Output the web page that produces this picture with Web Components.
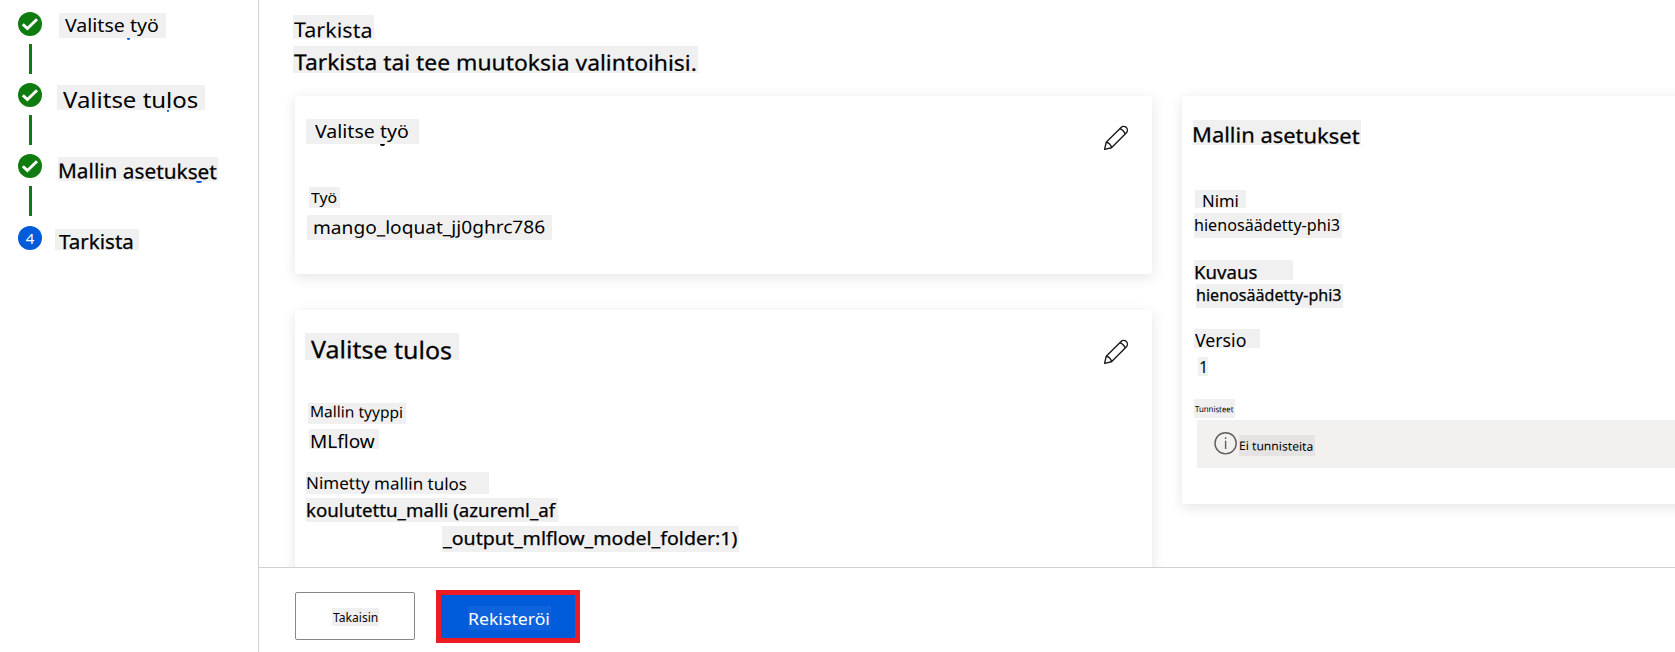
<!DOCTYPE html>
<html lang="fi">
<head>
<meta charset="utf-8">
<title>Rekisteröi malli</title>
<style>
html,body{margin:0;height:100%;background:#fff;overflow:hidden}
body{font-family:"Noto Sans","Open Sans",sans-serif;color:#000}
</style>
</head>
<body>
<wizard-page>
  <wizard-steps slot="steps">
    <wizard-step done><ui-label x="17" y="1" w="107" h="25" size="17.6" ink="93" dx="6" base="19.7" mark="68,3,#0a5ce0">Valitse työ</ui-label></wizard-step>
    <wizard-step done><ui-label x="15" y="2" w="148" h="25" size="22.4" ink="134.5" dx="5.5" base="24" mark="110,2,#0a5ce0">Valitse tulos</ui-label></wizard-step>
    <wizard-step done><ui-label x="16" y="3" w="160" h="24" size="20.2" ink="157.5" dx="1" base="21.4" tilt=".4" bold mark="138,6,#0a5ce0">Mallin asetukset</ui-label></wizard-step>
    <wizard-step number="4"><ui-label x="13" y="3" w="84" h="21" size="20.2" ink="73.5" dx="4.3" base="20.7" bold bg="#eff1f1">Tarkista</ui-label></wizard-step>
  </wizard-steps>

  <div slot="header">
    <ui-label x="34" y="15" w="81" h="24" size="20.4" ink="77" dx="1" base="22.8" tilt=".7">Tarkista</ui-label>
    <ui-label x="34" y="7" w="405" h="27" size="21.6" ink="402" dx=".7" base="24.5" tilt=".1" bold>Tarkista tai tee muutoksia valintoihisi.</ui-label>
  </div>

  <review-card slot="left" editable style="height:178px">
    <ui-label x="11" y="23" w="113" h="25" size="17.6" ink="93" dx="9" base="19.5" mark="74,5,#000">Valitse työ</ui-label>
    <ui-label x="14" y="43" w="31" h="21" size="15" ink="26" dx="2" base="16.5">Työ</ui-label>
    <ui-label x="12" y="7" w="245" h="25" size="17.6" ink="231" dx="7" base="19.5" tilt="-.2">mango_loquat_jj0ghrc786</ui-label>
  </review-card>

  <review-card slot="left" editable style="height:300px">
    <ui-label x="10" y="23" w="154" h="27" size="24" ink="140.5" dx="5.5" base="25" tilt=".5" bold>Valitse tulos</ui-label>
    <ui-label x="13" y="43" w="98" h="21" size="15.4" ink="91" dx="3" base="15.3" tilt=".7">Mallin tyyppi</ui-label>
    <ui-label x="14" y="5" w="70" h="20" size="17.4" ink="64" dx="2" base="19">MLflow</ui-label>
    <ui-label x="11" y="23" w="183" h="22" size="16.6" ink="160" dx="1" base="17" tilt=".4">Nimetty mallin tulos</ui-label>
    <ui-label x="11" y="4" w="252" h="24" size="17.8" ink="249" dx="1" base="19.6" bold>koulutettu_malli (azureml_af</ui-label>
    <ui-label x="147" y="4" w="297" h="26" size="18.2" ink="295" dx="0" base="20" bold>_output_mlflow_model_folder:1)</ui-label>
  </review-card>

  <review-card slot="right" style="height:408px">
    <ui-label x="11" y="24" w="168" h="25" size="20.6" ink="165" dx="1.5" base="22.8" tilt=".6" bold>Mallin asetukset</ui-label>
    <ui-label x="13" y="45" w="51" h="18" size="17" ink="35.5" dx="8" base="17.2">Nimi</ui-label>
    <ui-label x="12" y="5" w="148" h="25" size="15.8" ink="145" dx="1" base="19">hienosäädetty-phi3</ui-label>
    <ui-label x="12" y="22" w="99" h="20" size="18.6" ink="62.5" dx="1.5" base="19.3" bold>Kuvaus</ui-label>
    <ui-label x="14" y="4" w="147" h="24" size="15.8" ink="144.5" dx=".7" base="17.8" bold>hienosäädetty-phi3</ui-label>
    <ui-label x="12" y="21" w="66" h="19" size="17.2" ink="51" dx=".5" base="18.3">Versio</ui-label>
    <ui-label x="16" y="9" w="10" h="19" size="16" dx="2" base="16.4">1</ui-label>
    <ui-label x="12" y="23" w="41" h="19" size="8.4" ink="38.5" dx="1.3" base="13.6" tilt=".5">Tunnisteet</ui-label>
    <info-bar><ui-label x="2" y="0" w="76" h="21" size="12" ink="72.5" dx="1" base="15.7" tilt=".6" bg="#e5e4e3">Ei tunnisteita</ui-label></info-bar>
  </review-card>

  <ui-button slot="footer"><ui-label x="36" y="15" w="47" h="18" size="12.6" ink="44.5" dx="1" base="14.6">Takaisin</ui-label></ui-button>
  <ui-button slot="footer" primary><ui-label x="27" y="11" w="83" h="24" size="16.8" ink="80.5" dx="1.5" base="20" bg="#0e62dc">Rekisteröi</ui-label></ui-button>
</wizard-page>

<script>
const define = (name, html, setup) => {
  const tpl = document.createElement('template');
  tpl.innerHTML = html;
  customElements.define(name, class extends HTMLElement {
    connectedCallback() {
      if (this.shadowRoot) return;
      this.attachShadow({mode: 'open'}).append(tpl.content.cloneNode(true));
      if (setup) setup(this, this.shadowRoot);
    }
  });
};

define('wizard-page', `<style>
  :host{display:grid;grid-template-columns:259px minmax(0,1fr);width:100%;height:100vh;overflow:hidden;background:#fff}
  aside{box-sizing:border-box;border-right:1px solid #d1d1d1}
  main{display:grid;grid-template-rows:567px 1fr;min-width:0}
  .body{overflow:hidden;display:flex;flex-direction:column}
  header{height:96px;flex:none}
  .cards{display:grid;grid-template-columns:857px 540px;gap:30px;padding-left:36px;align-items:start}
  .left{display:flex;flex-direction:column;gap:36px}
  footer{box-sizing:border-box;border-top:1px solid #d1d1d1;display:flex;gap:21px;align-items:flex-start;padding:22px 0 0 36px;background:#fff}
</style>
<aside><slot name="steps"></slot></aside>
<main><div class="body"><header><slot name="header"></slot></header>
<div class="cards"><div class="left"><slot name="left"></slot></div><slot name="right"></slot></div></div>
<footer><slot name="footer"></slot></footer></main>`);

define('wizard-steps', `<style>:host{display:flex;flex-direction:column;padding:12px 0 0 18px}</style><slot></slot>`);

define('wizard-step', `<style>
  :host{display:flex;align-items:flex-start;height:71px}
  :host([number]){padding-top:1px}
  .rail{width:24px;display:flex;flex-direction:column;flex:none}
  .dot{width:24px;height:24px;border-radius:50%;background:#107c10;display:flex;align-items:center;justify-content:center}
  .line{width:3px;height:30px;margin:8px 0 0 11px;background:#107c10}
  .num{display:none;color:#fff;font-size:15px;line-height:24px}
  :host([number]) .dot{background:#005bda}
  :host([number]) .line,:host([number]) svg{display:none}
  :host([number]) .num{display:block}
</style>
<div class="rail"><div class="dot"><svg width="24" height="24" viewBox="0 0 24 24"><path d="M4.8 12.2 9.4 16.6 19 7.2" fill="none" stroke="#fff" stroke-width="2.9"/></svg><span class="num"></span></div><div class="line"></div></div><slot></slot>`,
(el, root) => { root.querySelector('.num').textContent = el.getAttribute('number') || ''; });

define('review-card', `<style>
  :host{display:block;box-sizing:border-box;position:relative;background:#fff;border-radius:3px;box-shadow:0 3px 14px rgba(0,0,0,.11)}
  .wrap{display:flow-root}
  svg{display:none;position:absolute;right:23px;top:29px}
  :host([editable]) svg{display:block}
</style>
<div class="wrap"><slot></slot></div>
<svg width="26" height="26" viewBox="0 0 26 26" fill="none" stroke="#1b1a19" stroke-width="1.4" stroke-linejoin="round"><path d="M1.6 24.4 3.2 17.3 17.8 2.7C19.4 1.1 21.8 1.1 23.3 2.6 24.8 4.1 24.8 6.5 23.2 8.1L8.5 22.7ZM3.2 17.3C5.6 17.5 8.2 20.1 8.5 22.7M16.7 3.8C19.1 4.2 21.6 6.8 22.1 9.2"/></svg>`);

define('info-bar', `<style>
  :host{display:flex;align-items:flex-start;box-sizing:border-box;height:48px;margin:2px 0 0 15px;padding:15px 0 0 17px;background:#f3f1f0}
  svg{margin-top:-4px;flex:none}
</style>
<svg width="23" height="24" viewBox="0 0 23 24" fill="none" stroke="#605e5c"><circle cx="11.6" cy="12.3" r="10.6" stroke-width="1.4"/><path d="M11.6 9.8V18M11.6 6.2V8.1" stroke-width="1.4"/></svg><slot></slot>`);

define('ui-button', `<style>
  :host{display:block;width:120px;height:48px;box-sizing:border-box;border:1px solid #8a8886;border-radius:2px;background:#fff;margin-top:2px}
  :host([primary]){width:144px;height:53px;border:5px solid #ed1c24;border-radius:0;background:#005bda;color:#fff;margin-top:0}
  div{display:flow-root}
</style><div><slot></slot></div>`);

const ctx = document.createElement('canvas').getContext('2d');
/* Label on a tinted plate: "ink" is the drawn text width, "base" the baseline from the plate's top. */
define('ui-label', `<style>
  :host{display:block;position:relative;flex:none}
  span{display:block;width:max-content;white-space:pre;transform-origin:0 50%}
  :host([bold]) span{-webkit-text-stroke:.25px currentColor}
  i{position:absolute;top:100%;height:2px;border-radius:0 0 2px 2px}
</style><span><slot></slot></span>`,
(el, root) => {
  const n = (k, d = 0) => parseFloat(el.getAttribute(k) ?? d);
  const span = root.querySelector('span'), text = el.textContent, size = n('size');
  ctx.font = `${size}px "Noto Sans"`;
  const m = ctx.measureText(text);
  const ink = m.actualBoundingBoxLeft + m.actualBoundingBoxRight;
  const scale = el.hasAttribute('ink') ? n('ink') / ink : 1;
  Object.assign(el.style, {
    margin: `${n('y')}px 0 0 ${n('x')}px`, width: n('w') + 'px', height: n('h') + 'px',
    background: el.getAttribute('bg') || '#f0f0f0'
  });
  Object.assign(span.style, {
    fontSize: size + 'px', lineHeight: 2 * (n('base') - .388 * size) + 'px',
    marginLeft: n('dx') + m.actualBoundingBoxLeft * scale + 'px',
    transform: `skewY(${n('tilt')}deg) scaleX(${scale})`
  });
  if (el.hasAttribute('mark')) {
    const [x, w, c] = el.getAttribute('mark').split(',');
    const i = document.createElement('i');
    Object.assign(i.style, {left: x + 'px', width: w + 'px', background: c});
    root.append(i);
  }
});
</script>
</body>
</html>
